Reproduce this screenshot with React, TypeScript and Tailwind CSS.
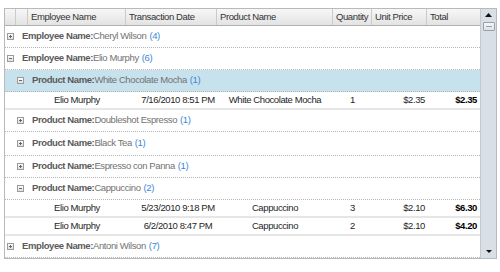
import React from "react";

type GroupRow = {
  kind: "group";
  level: 1 | 2;
  label: string;
  value: string;
  count: number;
  expanded: boolean;
  selected?: boolean;
  tall?: boolean;
};

type DataRow = {
  kind: "data";
  employee: string;
  date: string;
  product: string;
  qty: number;
  price: string;
  total: string;
};

type Row = GroupRow | DataRow;

const rows: Row[] = [
  { kind: "group", level: 1, label: "Employee Name:", value: "Cheryl Wilson", count: 4, expanded: false },
  { kind: "group", level: 1, label: "Employee Name:", value: "Elio Murphy", count: 6, expanded: true },
  { kind: "group", level: 2, label: "Product Name:", value: "White Chocolate Mocha", count: 1, expanded: true, selected: true },
  { kind: "data", employee: "Elio Murphy", date: "7/16/2010 8:51 PM", product: "White Chocolate Mocha", qty: 1, price: "$2.35", total: "$2.35" },
  { kind: "group", level: 2, label: "Product Name:", value: "Doubleshot Espresso", count: 1, expanded: false },
  { kind: "group", level: 2, label: "Product Name:", value: "Black Tea", count: 1, expanded: false, tall: true },
  { kind: "group", level: 2, label: "Product Name:", value: "Espresso con Panna", count: 1, expanded: false },
  { kind: "group", level: 2, label: "Product Name:", value: "Cappuccino", count: 2, expanded: true },
  { kind: "data", employee: "Elio Murphy", date: "5/23/2010 9:18 PM", product: "Cappuccino", qty: 3, price: "$2.10", total: "$6.30" },
  { kind: "data", employee: "Elio Murphy", date: "6/2/2010 8:47 PM", product: "Cappuccino", qty: 2, price: "$2.10", total: "$4.20" },
  { kind: "group", level: 1, label: "Employee Name:", value: "Antoni Wilson", count: 7, expanded: false },
];

const columns = [
  { title: "", w: "w-[11px]" },
  { title: "", w: "w-[12px]" },
  { title: "Employee Name", w: "w-[98px]" },
  { title: "Transaction Date", w: "w-[91px]" },
  { title: "Product Name", w: "w-[116px]" },
  { title: "Quantity", w: "w-[39px]" },
  { title: "Unit Price", w: "w-[55px]" },
  { title: "Total", w: "flex-1" },
];

const Expander = ({ open }: { open: boolean }) => (
  <svg width="7" height="7" viewBox="0 0 7 7" className="shrink-0">
    <defs>
      <linearGradient id="exp" x1="0" y1="0" x2="0" y2="1">
        <stop offset="0" stopColor="#ffffff" />
        <stop offset="1" stopColor="#dcdcdc" />
      </linearGradient>
    </defs>
    <rect x="0.5" y="0.5" width="6" height="6" fill="url(#exp)" stroke="#9b9b9b" />
    <line x1="2" y1="3.5" x2="5" y2="3.5" stroke="#666" />
    {!open && <line x1="3.5" y1="2" x2="3.5" y2="5" stroke="#666" />}
  </svg>
);

const Group = ({ row }: { row: GroupRow }) => (
  <div
    className={`flex shrink-0 items-center border-b border-dotted border-[#b4b4b4] ${
      row.tall ? "h-[24px]" : "h-[22px]"
    } ${row.selected ? "bg-[#c7e2ec]" : ""} ${row.level === 1 ? "pl-[2px]" : "pl-[12px]"}`}
  >
    <Expander open={row.expanded} />
    <span className="ml-[8px] font-bold text-[#5a5a5a]">{row.label}</span>
    <span className="text-[#727272]">{row.value}</span>
    <span className="ml-[3px] text-[#3a86d8]">({row.count})</span>
  </div>
);

const Data = ({ row }: { row: DataRow }) => (
  <div className="flex h-[18px] shrink-0 items-center border-b-2 border-[#e6e6e6] text-[#262626]">
    <div className="w-[23px]" />
    <div className="w-[98px] text-center">{row.employee}</div>
    <div className="w-[91px] pl-[13px] text-center">{row.date}</div>
    <div className="w-[116px] text-center">{row.product}</div>
    <div className="w-[39px] text-center">{row.qty}</div>
    <div className="w-[55px] pr-[2px] text-right">{row.price}</div>
    <div className="flex-1 pr-[3px] text-right font-bold text-black">{row.total}</div>
  </div>
);

export default function App() {
  return (
    <div className="h-[272px] w-[500px] bg-white pl-[4px] pt-[8px] font-['Liberation_Sans',sans-serif] text-[9.5px] tracking-[-0.4px]">
      <div className="flex h-[251px] w-[493px] border border-[#b9b9b9]">
        <div className="flex min-w-0 flex-1 flex-col overflow-hidden">
          <div className="flex h-[17px] shrink-0 border-b border-[#b0b0b0] bg-gradient-to-b from-[#f7f7f7] to-[#e3e3e3] text-[#333]">
            {columns.map((c, i) => (
              <div
                key={i}
                className={`${c.w} flex items-center border-r border-[#cbcbcb] pl-[3px] last:border-r-0`}
              >
                {c.title}
              </div>
            ))}
          </div>
          {rows.map((r, i) =>
            r.kind === "group" ? <Group key={i} row={r} /> : <Data key={i} row={r} />
          )}
        </div>
        <div className="flex w-[16px] shrink-0 flex-col items-center border-l border-[#c4c9d0] bg-[#d9dfe6]">
          <svg width="7" height="4" viewBox="0 0 7 4" className="mt-[4px]">
            <path d="M0 4 L3.5 0 L7 4 Z" fill="#111" />
          </svg>
          <div className="mt-[5px] flex h-[9px] w-[12px] items-center justify-center rounded-[1px] border border-[#9aa0a8] bg-gradient-to-b from-[#f4f6f8] to-[#dfe3e8]">
            <div className="h-px w-[6px] bg-[#9aa0a8]" />
          </div>
          <div className="flex-1" />
          <svg width="6" height="3" viewBox="0 0 6 3" className="mb-[5px]">
            <path d="M0 0 L6 0 L3 3 Z" fill="#111" />
          </svg>
        </div>
      </div>
    </div>
  );
}
